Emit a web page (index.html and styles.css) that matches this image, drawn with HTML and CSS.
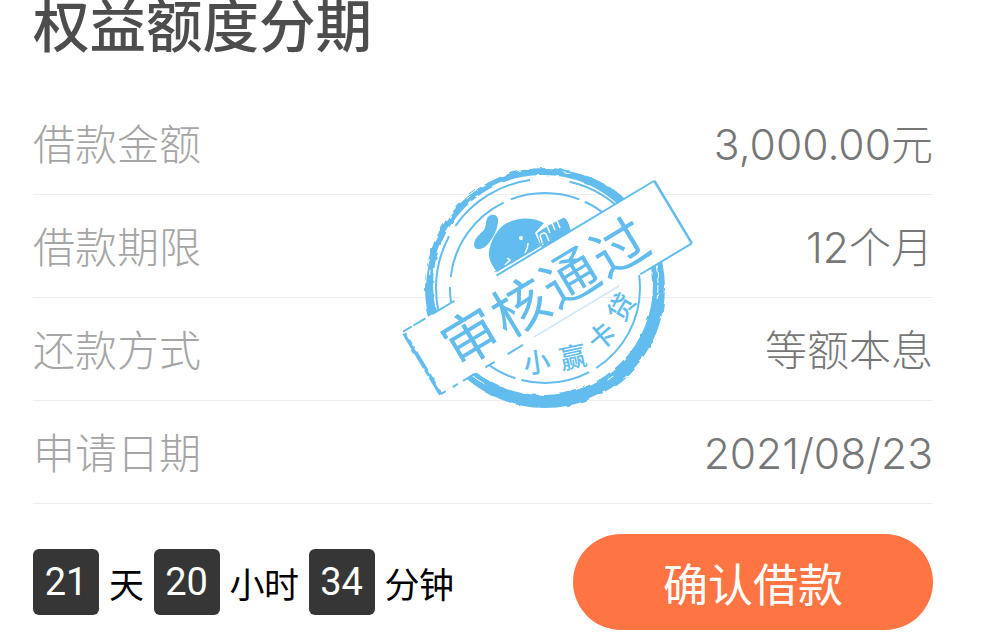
FILE: index.html
```html
<!DOCTYPE html>
<html lang="en">
<head>
    <meta name="viewport" content="width=device-width, initial-scale=1">
    <title>权益额度分期</title>
    <link rel="stylesheet" href="styles.css">
</head>

<body>
    <div class="page">
        <p class="title">权益额度分期</p>

        <div class="row"><span class="label">借款金额</span><span class="value"><span class="num">3,000.00</span>元</span></div>
        <div class="row"><span class="label">借款期限</span><span class="value"><span class="num">12</span>个月</span></div>
        <div class="row"><span class="label">还款方式</span><span class="value">等额本息</span></div>
        <div class="row"><span class="label">申请日期</span><span class="value"><span class="num">2021/08/23</span></span></div>

        <div class="footer">
            <div class="countdown">
                <span class="chip">21</span><span class="unit">天</span>
                <span class="chip">20</span><span class="unit">小时</span>
                <span class="chip">34</span><span class="unit">分钟</span>
            </div>
            <button class="confirm">确认借款</button>
        </div>

        <svg class="stamp" viewBox="395 160 300 260" width="300" height="260">
            <defs>
                <filter id="rough" x="-5%" y="-5%" width="110%" height="110%">
                    <feTurbulence type="fractalNoise" baseFrequency="0.09" numOctaves="2" seed="4"/>
                    <feDisplacementMap in="SourceGraphic" scale="4"/>
                </filter>
            </defs>

            <!-- outer rings, thicker towards the lower right -->
            <g filter="url(#rough)">
                <path class="solid" fill-rule="evenodd" d="M425 288 A120 120 0 1 1 665 288 A120 120 0 1 1 425 288 Z M433 285 A110 110 0 1 0 653 285 A110 110 0 1 0 433 285 Z"/>
                <circle cx="543" cy="285" r="115" class="ring-nick"/>
            </g>
            <circle cx="545" cy="288" r="109" class="ring-thin"/>
            <circle cx="545" cy="288" r="95" class="ring-dash"/>

            <!-- whale -->
            <path class="solid" d="M497 272 C490 263 487 255 490 247 C493 236 499 228 505 224 C518 217 532 217 544 223 L535 233 L541 246 Z"/>
            <path class="solid" d="M474 245 C474 238 480 234 484 230 C487 225 485 219 489 216 C494 213 499 216 498 222 C497 231 493 238 488 244 C484 249 475 252 474 245 Z"/>
            <path class="solid" d="M537 233 C545 227 555 222 563 218 C566 217 568 222 571 231 L542 248 Z"/>
            <path class="cut" d="M543 245 L540 236 C541 233 545 232 546 234 L549 241 M550 233 L547 226 M555 230 L552 223 M560 228 L557 221"/>
            <circle class="cut-fill" cx="521" cy="238" r="2"/>
            <path class="cut" d="M525 253 C527 250 528 247 528 243 M507 258 L510 260 L505 265"/>

            <!-- band -->
            <g transform="rotate(-31 547.5 287.5)">
                <rect class="band" x="401" y="251" width="293" height="73"/>
                <path class="edge-top" d="M401 251 H694"/>
                <path class="edge-double" d="M510 247 H570"/>
                <path class="edge-right" d="M694 251 V324"/>
                <rect class="solid" filter="url(#rough)" x="399" y="253" width="4" height="71"/>
                <path class="edge-bottom" d="M401 324 H694"/>
                <path class="edge-pale" d="M510 323 H610"/>
                <text class="band-text" x="544" y="311" text-anchor="middle">审核通过</text>
            </g>

            <text class="small" transform="translate(538 372) rotate(-8)" text-anchor="middle">小</text>
            <text class="small" transform="translate(575 367) rotate(-12)" text-anchor="middle">赢</text>
            <text class="small" transform="translate(608 344) rotate(-40)" text-anchor="middle">卡</text>
            <text class="small" transform="translate(630 312) rotate(-60)" text-anchor="middle">贷</text>
        </svg>
    </div>
</body>
</html>
```

FILE: styles.css
```css
body {
    margin: 0;
    background: white;
    font-family: "Liberation Sans", "Noto Sans CJK SC", sans-serif;
    overflow: hidden;
}

.page {
    position: relative;
    height: 642px;
    padding: 0 55px 0 33px;
}

.title {
    margin: 0 0 38px;
    height: 54px;
    line-height: 44px;
    font-size: 56.5px;
    color: #4d4d4d;
    font-weight: 500;
    font-family: "Noto Sans CJK SC", sans-serif;
    white-space: nowrap;
}

.row {
    display: flex;
    justify-content: space-between;
    align-items: center;
    box-sizing: border-box;
    height: 103px;
    padding-bottom: 2px;
    border-bottom: 1px solid #eee;
}

.label {
    font-size: 42px;
    line-height: 50px;
    color: #a5a5a5;
    font-family: "Noto Sans CJK SC", sans-serif;
    font-weight: 300;
}

.value {
    padding-top: 6px;
    font-size: 42px;
    line-height: 50px;
    color: #777;
    font-family: Inter, "Noto Sans CJK SC", sans-serif;
    font-weight: 300;
}

.num {
    font-size: 42.6px;
}

.footer {
    display: flex;
    justify-content: space-between;
    align-items: center;
    padding-top: 30px;
}

.countdown {
    display: flex;
    align-items: center;
    gap: 10px;
}

.chip {
    width: 66px;
    height: 66px;
    line-height: 66px;
    text-align: center;
    background-color: #363636;
    border-radius: 6px;
    color: white;
    font-family: Roboto, sans-serif;
    font-size: 38px;
}

.unit {
    font-size: 35px;
    letter-spacing: -0.5px;
    color: black;
}

.confirm {
    width: 360px;
    height: 96px;
    border: none;
    border-radius: 48px;
    background-color: #ff7443;
    color: white;
    font-size: 45px;
    font-family: "Noto Sans CJK SC", sans-serif;
    font-weight: 400;
}

.stamp {
    position: absolute;
    left: 395px;
    top: 160px;
}

.ring-nick {
    fill: none;
    stroke: white;
    stroke-width: 1;
    stroke-dasharray: 14 90 8 130 20 110 6 80;
}

.ring-thin {
    fill: none;
    stroke: #62bdee;
    stroke-width: 2;
    stroke-dasharray: 130 16 70 30 150 12 90 40;
}

.ring-dash {
    fill: none;
    stroke: #62bdee;
    stroke-width: 2;
    stroke-dasharray: 95 8 70 6 120 10;
}

.solid {
    fill: #62bdee;
}

.cut {
    fill: none;
    stroke: white;
    stroke-width: 1.5;
}

.cut-fill {
    fill: white;
}

.band {
    fill: white;
}

.edge-top {
    fill: none;
    stroke: #62bdee;
    stroke-width: 2;
    stroke-dasharray: 10 2 14 8 26 49 184;
}

.edge-double {
    fill: none;
    stroke: #62bdee;
    stroke-width: 1;
}

.edge-right {
    fill: none;
    stroke: #62bdee;
    stroke-width: 2.5;
}

.edge-bottom {
    fill: none;
    stroke: #62bdee;
    stroke-width: 2;
    stroke-dasharray: 6 8 6 6 14 12 11 15 18 137 60 100;
}

.edge-pale {
    fill: none;
    stroke: #cfe9f8;
    stroke-width: 1.5;
}

.band-text {
    fill: #62bdee;
    font-family: "Noto Sans CJK SC", sans-serif;
    font-size: 56px;
    font-weight: 400;
    letter-spacing: 2px;
}

.small {
    fill: #62bdee;
    font-family: "Noto Sans CJK SC", sans-serif;
    font-size: 27px;
    font-weight: 500;
}
```
